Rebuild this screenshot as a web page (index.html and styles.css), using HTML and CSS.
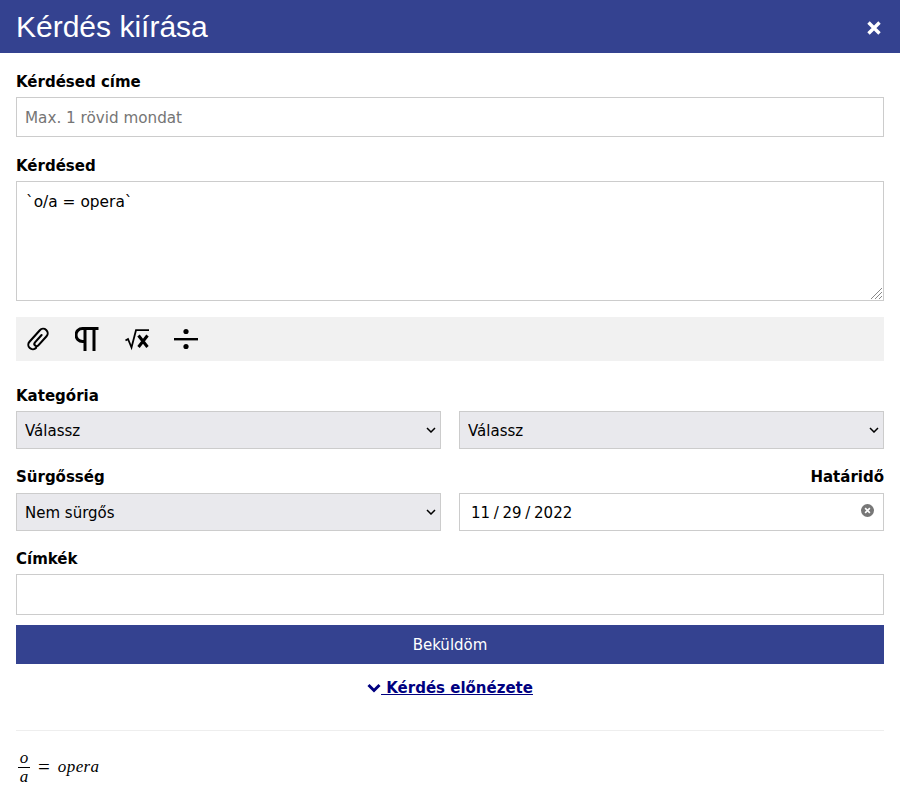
FILE: index.html
```html
<!DOCTYPE html>
<html lang="hu">
<head>
    <meta charset="UTF-8">
    <meta name="viewport" content="width=device-width, initial-scale=1.0">
    <title>Kérdés kiírása</title>
    <link rel="stylesheet" href="styles.css">
</head>
<body>
    <header class="modal-header">
        <h1>Kérdés kiírása</h1>
        <button class="close" type="button" aria-label="Bezárás">
            <svg width="16" height="16" viewBox="0 0 16 16"><path d="M2.500 2.500l11 11M13.500 2.500l-11 11" stroke="#fff" stroke-width="3.400" fill="none"/></svg>
        </button>
    </header>
    <form class="modal-body">
        <label class="field-label" for="title">Kérdésed címe</label>
        <input class="text-input" type="text" id="title" placeholder="Max. 1 rövid mondat">

        <label class="field-label" for="question">Kérdésed</label>
        <textarea class="question" id="question">`o/a = opera`</textarea>

        <div class="toolbar">
            <svg class="tool" width="24" height="24" viewBox="-12 -12 24 24" fill="none" stroke="#000" stroke-width="2.300" stroke-linecap="round"><path transform="rotate(42) scale(.9)" d="M0-6V5a2.500 2.500 0 0 0 5 0V-8.600a5 5 0 0 0-10 0V8.600a5 5 0 0 0 10 0"/></svg>
            <svg class="tool" width="24" height="24" viewBox="0 0 24 24" fill="none" stroke="#000" stroke-width="3"><path d="M23.500 1.500H7.500a6.500 6.500 0 0 0 0 13H10"/><path d="M10 1.500V24M19 1.500V24"/></svg>
            <svg class="tool" width="24" height="24" viewBox="0 0 24 24" fill="none" stroke="#000"><path d="M.5 13.500l2.500-1.500 3.500 8.500L11 3.200H24" stroke-width="1.800"/><path d="M13.500 8.500l9 11.500M22.500 8.500l-9 11.500" stroke-width="3"/></svg>
            <svg class="tool" width="24" height="24" viewBox="0 0 24 24"><circle cx="12" cy="4.500" r="2.600"/><rect y="11" width="24" height="2.400"/><circle cx="12" cy="19.500" r="2.600"/></svg>
        </div>

        <label class="field-label category-label" for="cat1">Kategória</label>
        <div class="two-col">
            <select class="select" id="cat1"><option>Válassz</option></select>
            <select class="select" aria-label="Alkategória"><option>Válassz</option></select>
        </div>

        <div class="two-col label-row">
            <label class="field-label" for="urgency">Sürgősség</label>
            <label class="field-label align-right" for="deadline">Határidő</label>
        </div>
        <div class="two-col">
            <select class="select" id="urgency"><option>Nem sürgős</option></select>
            <div class="date-wrap">
                <input class="date-input" type="date" id="deadline" value="2022-11-29">
                <svg class="date-clear" width="13" height="13" viewBox="0 0 12 12"><circle cx="6" cy="6" r="6" fill="#777"/><path d="M3.800 3.800l4.400 4.400M8.200 3.800l-4.400 4.400" stroke="#fff" stroke-width="1.500"/></svg>
            </div>
        </div>

        <label class="field-label tags-label" for="tags">Címkék</label>
        <input class="text-input tags" type="text" id="tags">

        <button class="submit" type="submit">Beküldöm</button>

        <div class="preview-toggle">
            <a href="#">
                <svg width="14" height="10" viewBox="0 0 14 10"><path d="M1.500 2l5.500 5.500L12.500 2" fill="none" stroke="#000080" stroke-width="3"/></svg>
                Kérdés előnézete</a>
        </div>

        <hr class="divider">

        <div class="math">
            <span class="frac"><span class="num">o</span><span class="den">a</span></span>
            <span class="eq">=</span>
            <span class="var">opera</span>
        </div>
    </form>
</body>
</html>
```

FILE: styles.css
```css
* {
    box-sizing: border-box;
}

body {
    margin: 0;
    background-color: #ffffff;
    color: #000000;
    font-family: "DejaVu Sans", Verdana, sans-serif;
    font-size: 15px;
}

.modal-header {
    display: flex;
    justify-content: space-between;
    align-items: center;
    height: 53px;
    padding: 0 18px 0 16px;
    background-color: #344290;
    color: #ffffff;
}

.modal-header h1 {
    margin: 0;
    font-family: "Liberation Sans", Arial, sans-serif;
    font-size: 30px;
    font-weight: 400;
}

.close {
    display: flex;
    margin-top: 2px;
    padding: 0;
    border: none;
    background: none;
}

.modal-body {
    padding: 0 16px;
}

.field-label {
    display: block;
    height: 44px;
    padding-top: 20px;
    line-height: 18px;
    font-weight: 700;
}

.text-input,
.question,
.select,
.date-input {
    display: block;
    width: 100%;
    border: 1px solid #cccccc;
    border-radius: 0;
    font-family: inherit;
    font-size: 15px;
    color: #000000;
}

.text-input {
    height: 40px;
    padding: 2px 8px 0;
    background-color: #ffffff;
    font-size: 15.2px;
}

.text-input::placeholder {
    color: #757575;
}

.question {
    height: 120px;
    padding: 11px 9px;
    resize: none;
    background: #ffffff url("data:image/svg+xml,%3Csvg xmlns='http://www.w3.org/2000/svg' width='12' height='12'%3E%3Cpath d='M1 12L12 1M5 12l7-7M9 12l3-3' stroke='%23888' fill='none'/%3E%3C/svg%3E") no-repeat right 1px bottom 1px;
    font-size: 15.4px;
}

.toolbar {
    display: flex;
    align-items: center;
    gap: 25.4px;
    height: 44px;
    margin-top: 16px;
    padding-left: 10px;
    background-color: #f1f1f1;
}

.tool {
    flex: none;
}

.category-label {
    height: 50px;
    padding-top: 26px;
}

.two-col {
    display: grid;
    grid-template-columns: 1fr 1fr;
    gap: 18px;
}

.select {
    height: 38px;
    padding: 2px 8px 0;
    appearance: none;
    background: #e9e9ed url("data:image/svg+xml,%3Csvg xmlns='http://www.w3.org/2000/svg' width='10' height='6'%3E%3Cpath d='M1 1l4 4 4-4' stroke='%23000' stroke-width='1.500' fill='none'/%3E%3C/svg%3E") no-repeat right 4px center;
}

.label-row {
    height: 44px;
}

.label-row .field-label {
    padding-top: 19px;
}

.align-right {
    text-align: right;
}

.date-wrap {
    position: relative;
}

.date-input {
    height: 38px;
    padding: 2px 10px 0;
    background-color: #ffffff;
}

.date-input::-webkit-calendar-picker-indicator {
    display: none;
}

.date-input::-webkit-datetime-edit-text {
    padding: 0 2.700px;
}

.date-clear {
    position: absolute;
    top: 11px;
    right: 10px;
}

.tags-label {
    height: 43px;
    padding-top: 19px;
}

.tags {
    height: 41px;
}

.submit {
    display: block;
    width: 100%;
    height: 39px;
    margin-top: 10px;
    border: none;
    background-color: #344290;
    color: #ffffff;
    font-family: inherit;
    font-size: 15px;
}

.preview-toggle {
    margin-top: 14px;
    line-height: 20px;
    text-align: center;
}

.preview-toggle a {
    color: #000080;
    font-weight: 700;
}

.divider {
    height: 1px;
    margin: 32px 0 0;
    border: none;
    background-color: #eeeeee;
}

.math {
    display: flex;
    align-items: center;
    gap: 8px;
    height: 36px;
    margin-top: 18px;
    padding-left: 2px;
    font-family: "Liberation Serif", "Times New Roman", serif;
    font-size: 17px;
}

.frac {
    display: flex;
    flex-direction: column;
    align-items: center;
    width: 12px;
    font-style: italic;
    line-height: 18px;
}

.num {
    width: 100%;
    border-bottom: 1px solid #000000;
    text-align: center;
}

.den {
    width: 100%;
    text-align: center;
}

.eq {
    font-size: 21px;
    line-height: 21px;
}

.var {
    font-style: italic;
    letter-spacing: 0.4px;
}
```
